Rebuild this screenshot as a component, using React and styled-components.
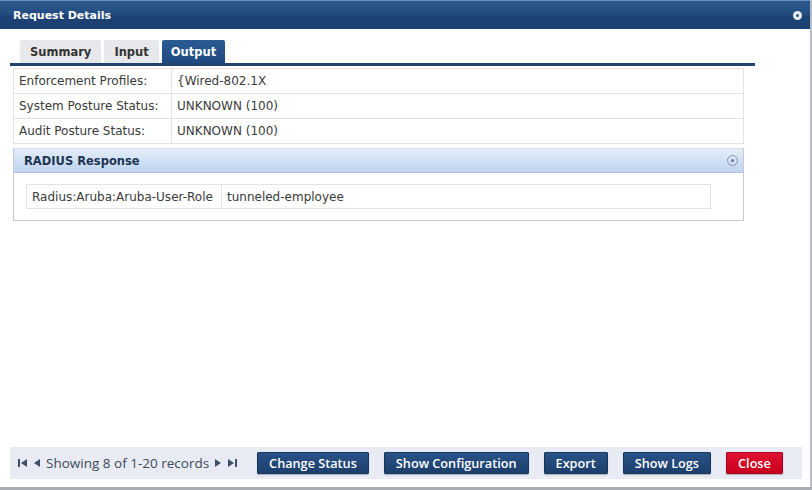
import styled, { createGlobalStyle } from "styled-components"

const GlobalStyle = createGlobalStyle`
    html, body {
        margin: 0;
        padding: 0;
        background: #ffffff;
    }
    body {
        font-family: "DejaVu Sans", Verdana, sans-serif;
        color: #333;
    }
`

const Dialog = styled.div`
    width: 812px;
    height: 490px;
    box-sizing: border-box;
    display: flex;
    flex-direction: column;
    background: #fff;
    border-right: 2px solid #b9bcc2;
    border-bottom: 3px solid #a9acb2;
`

const TitleBar = styled.div`
    height: 28px;
    flex-shrink: 0;
    display: flex;
    align-items: center;
    justify-content: space-between;
    padding: 0 8px 0 13px;
    background: linear-gradient(#2d5a8e 0%, #234d80 45%, #1c4275 55%, #1b3f6f 100%);
    border-top: 1px solid #6d8cb3;
`

const Title = styled.h1`
    margin: 0;
    font-size: 11px;
    font-weight: bold;
    color: #fff;
`

const CloseDot = styled.span`
    width: 9px;
    height: 9px;
    border-radius: 50%;
    background: #e8ecf2;
    display: flex;
    align-items: center;
    justify-content: center;
    &::after {
        content: "";
        width: 3px;
        height: 3px;
        border-radius: 50%;
        background: #35557f;
    }
`

const Body = styled.div`
    flex: 1;
    display: flex;
    flex-direction: column;
    padding: 11px 0 0 10px;
`

const TabBar = styled.div`
    display: flex;
    gap: 3px;
    width: 745px;
    padding-left: 10px;
    box-sizing: border-box;
    border-bottom: 3px solid #1f4472;
`

const Tab = styled.div`
    height: 23px;
    padding: 0 ${(p) => p.$pad}px;
    display: flex;
    align-items: center;
    font-size: 11.5px;
    font-weight: bold;
    border-radius: 2px 2px 0 0;
    color: ${(p) => (p.$active ? "#fff" : "#333")};
    background: ${(p) =>
        p.$active ? "linear-gradient(#2b5a93, #1f4a80)" : "#e7e8ec"};
`

const InfoTable = styled.table`
    margin: 2px 0 0 3px;
    width: 731px;
    border-collapse: collapse;
    font-size: 12px;
`

const Cell = styled.td`
    height: 24px;
    padding: 0 5px;
    border: 1px solid #e1e3e6;
    white-space: nowrap;
    width: ${(p) => (p.$label ? "147px" : "auto")};
    color: #3a3a3a;
`

const Panel = styled.section`
    margin: 4px 0 0 3px;
    width: 731px;
    box-sizing: border-box;
    border: 1px solid #c6c9ce;
    border-top-color: #d6d9de;
`

const PanelHeader = styled.div`
    height: 23px;
    display: flex;
    align-items: center;
    justify-content: space-between;
    padding: 0 5px 0 10px;
    background: linear-gradient(#e4edf9, #bfd4f1);
    border-bottom: 1px solid #b3c3da;
    font-size: 11.5px;
    font-weight: bold;
    color: #1e3552;
`

const Collapse = styled.span`
    width: 9px;
    height: 9px;
    border: 1px solid #8a96a6;
    border-radius: 50%;
    display: flex;
    align-items: center;
    justify-content: center;
    &::after {
        content: "";
        width: 3px;
        height: 3px;
        border-radius: 50%;
        background: #6a7587;
    }
`

const PanelBody = styled.div`
    padding: 11px 12px 11px;
`

const InnerTable = styled.table`
    width: 685px;
    border-collapse: collapse;
    font-size: 12px;
`

const InnerCell = styled(Cell)`
    height: 23px;
    width: ${(p) => (p.$label ? "184px" : "auto")};
`

const Spacer = styled.div`
    flex: 1;
`

const Footer = styled.div`
    margin: 0 0 8px 0;
    width: 792px;
    height: 32px;
    box-sizing: border-box;
    background: #e8ebf4;
    display: flex;
    align-items: center;
    padding-left: 8px;
`

const Pager = styled.div`
    display: flex;
    align-items: center;
    gap: 5px;
    font-family: "Open Sans", "DejaVu Sans", sans-serif;
    font-size: 13.5px;
    color: #3e4a5a;
    margin-right: 20px;
`

const PagerIcon = styled.svg`
    width: 9px;
    height: 8px;
    fill: #3d4f6a;
    flex-shrink: 0;
`

const Buttons = styled.div`
    display: flex;
    gap: 15px;
`

const Button = styled.button`
    height: 22px;
    padding: 0 11px;
    border: 1px solid ${(p) => (p.$danger ? "#a8001a" : "#16365e")};
    border-radius: 1px;
    background: ${(p) =>
        p.$danger
            ? "linear-gradient(#e0112f, #c8001e)"
            : "linear-gradient(#2a5287, #1c3f6c)"};
    color: #fff;
    font-family: "Open Sans", "DejaVu Sans", sans-serif;
    font-size: 12.7px;
    font-weight: 600;
    cursor: pointer;
    box-shadow: 0 1px 1px rgba(0, 0, 0, 0.25);
`

const FirstIcon = () => (
    <PagerIcon viewBox="0 0 9 8">
        <rect x="0" y="0" width="2" height="8" />
        <polygon points="9,0 9,8 3,4" />
    </PagerIcon>
)
const PrevIcon = () => (
    <PagerIcon viewBox="0 0 9 8">
        <polygon points="8,0 8,8 2,4" />
    </PagerIcon>
)
const NextIcon = () => (
    <PagerIcon viewBox="0 0 9 8">
        <polygon points="1,0 1,8 7,4" />
    </PagerIcon>
)
const LastIcon = () => (
    <PagerIcon viewBox="0 0 9 8">
        <polygon points="0,0 0,8 6,4" />
        <rect x="7" y="0" width="2" height="8" />
    </PagerIcon>
)

const rows = [
    ["Enforcement Profiles:", "{Wired-802.1X"],
    ["System Posture Status:", "UNKNOWN (100)"],
    ["Audit Posture Status:", "UNKNOWN (100)"],
]

export default function App() {
    return (
        <>
            <GlobalStyle />
            <Dialog>
                <TitleBar>
                    <Title>Request Details</Title>
                    <CloseDot />
                </TitleBar>
                <Body>
                    <TabBar>
                        <Tab $pad={10}>Summary</Tab>
                        <Tab $pad={10}>Input</Tab>
                        <Tab $pad={9} $active>
                            Output
                        </Tab>
                    </TabBar>
                    <InfoTable>
                        <tbody>
                            {rows.map(([label, value]) => (
                                <tr key={label}>
                                    <Cell $label>{label}</Cell>
                                    <Cell>{value}</Cell>
                                </tr>
                            ))}
                        </tbody>
                    </InfoTable>
                    <Panel>
                        <PanelHeader>
                            RADIUS Response
                            <Collapse />
                        </PanelHeader>
                        <PanelBody>
                            <InnerTable>
                                <tbody>
                                    <tr>
                                        <InnerCell $label>
                                            Radius:Aruba:Aruba-User-Role
                                        </InnerCell>
                                        <InnerCell>tunneled-employee</InnerCell>
                                    </tr>
                                </tbody>
                            </InnerTable>
                        </PanelBody>
                    </Panel>
                    <Spacer />
                    <Footer>
                        <Pager>
                            <FirstIcon />
                            <PrevIcon />
                            <span>Showing 8 of 1-20 records</span>
                            <NextIcon />
                            <LastIcon />
                        </Pager>
                        <Buttons>
                            <Button>Change Status</Button>
                            <Button>Show Configuration</Button>
                            <Button>Export</Button>
                            <Button>Show Logs</Button>
                            <Button $danger>Close</Button>
                        </Buttons>
                    </Footer>
                </Body>
            </Dialog>
        </>
    )
}
